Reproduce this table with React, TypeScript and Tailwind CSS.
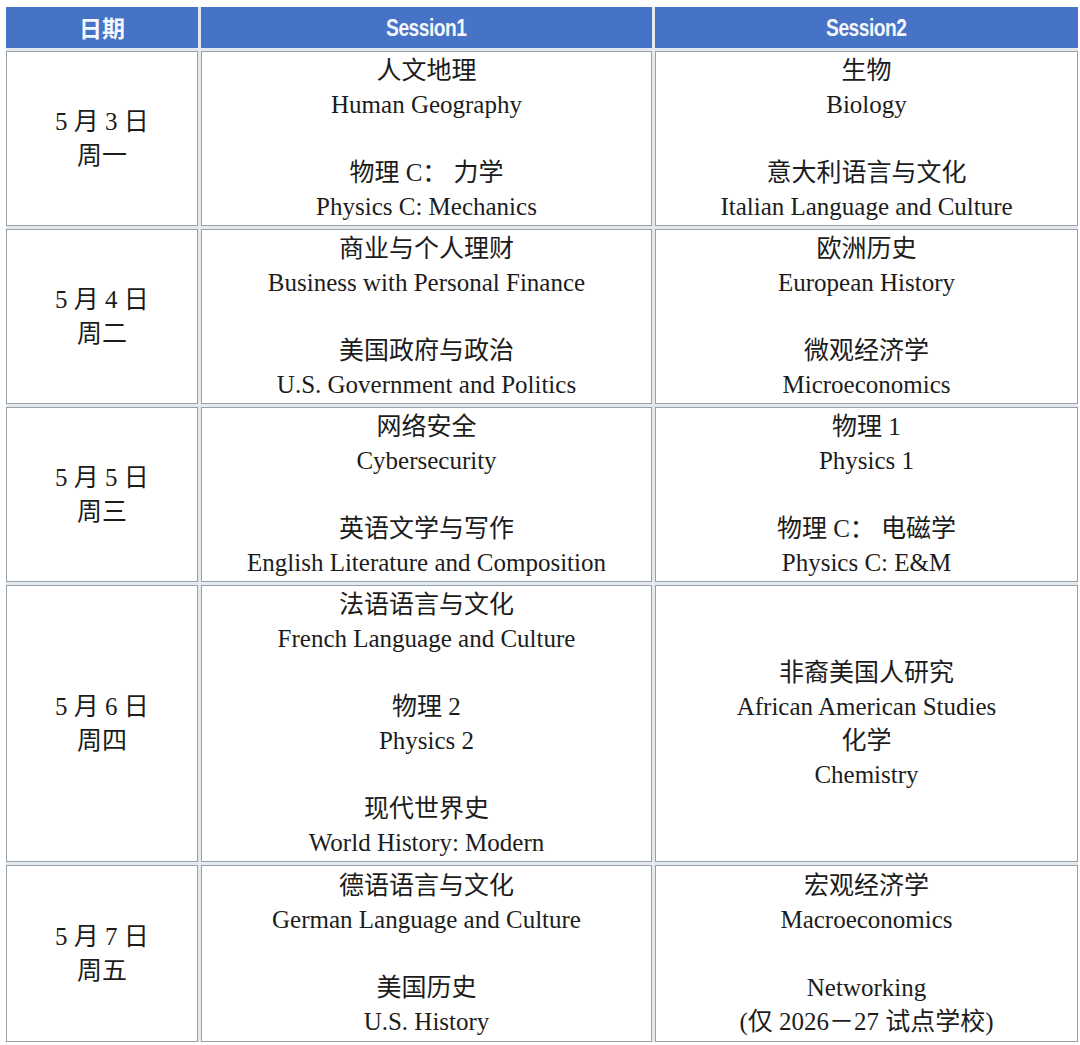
import * as React from "react";

type Row = {
  date: string;
  day: string;
  s1: string[];
  s2: string[];
};

const ROWS: Row[] = [
  {
    date: "5 月 3 日",
    day: "周一",
    s1: ["人文地理", "Human Geography", "", "物理 C： 力学", "Physics C: Mechanics"],
    s2: ["生物", "Biology", "", "意大利语言与文化", "Italian Language and Culture"],
  },
  {
    date: "5 月 4 日",
    day: "周二",
    s1: ["商业与个人理财", "Business with Personal Finance", "", "美国政府与政治", "U.S. Government and Politics"],
    s2: ["欧洲历史", "European History", "", "微观经济学", "Microeconomics"],
  },
  {
    date: "5 月 5 日",
    day: "周三",
    s1: ["网络安全", "Cybersecurity", "", "英语文学与写作", "English Literature and Composition"],
    s2: ["物理 1", "Physics 1", "", "物理 C： 电磁学", "Physics C: E&M"],
  },
  {
    date: "5 月 6 日",
    day: "周四",
    s1: [
      "法语语言与文化",
      "French Language and Culture",
      "",
      "物理 2",
      "Physics 2",
      "",
      "现代世界史",
      "World History: Modern",
    ],
    s2: ["非裔美国人研究", "African American Studies", "化学", "Chemistry"],
  },
  {
    date: "5 月 7 日",
    day: "周五",
    s1: ["德语语言与文化", "German Language and Culture", "", "美国历史", "U.S. History"],
    s2: ["宏观经济学", "Macroeconomics", "", "Networking", "(仅 2026－27 试点学校)"],
  },
];

const BODY_FONT = "font-['Liberation_Serif','Noto_Sans_CJK_SC',serif]";

function Cell({ lines }: { lines: string[] }) {
  return (
    <div className="flex flex-col items-center justify-center border border-[#98a1ab] bg-white text-center text-[25px] leading-[34px] text-[#1c1c1c]">
      {lines.map((line, i) => (
        <div key={i} className="h-[34px] whitespace-nowrap">
          {line}
        </div>
      ))}
    </div>
  );
}

export default function App() {
  return (
    <div className="min-h-[1045px] bg-white pl-[6px] pt-[7px]">
      <div
        className={`grid w-[1072px] grid-cols-[192px_451px_423px] grid-rows-[41px_175px_175px_175px_277px_177px] gap-[3px] bg-[#e4e9ee] ${BODY_FONT}`}
      >
        <div className="flex items-center justify-center bg-[#4673c6] font-['Noto_Sans_CJK_SC',sans-serif] text-[23px] font-bold text-[#f4f7fc]">
          日期
        </div>
        {["Session1", "Session2"].map((h) => (
          <div
            key={h}
            className="flex items-center justify-center bg-[#4673c6] font-['Liberation_Sans',sans-serif] text-[24px] font-bold text-[#f4f7fc]"
          >
            {/* header face in the source is a condensed bold sans */}
            <span className="inline-block scale-x-[0.8] tracking-tight">{h}</span>
          </div>
        ))}
        {ROWS.map((row) => (
          <React.Fragment key={row.date}>
            <Cell lines={[row.date, row.day]} />
            <Cell lines={row.s1} />
            <Cell lines={row.s2} />
          </React.Fragment>
        ))}
      </div>
    </div>
  );
}
